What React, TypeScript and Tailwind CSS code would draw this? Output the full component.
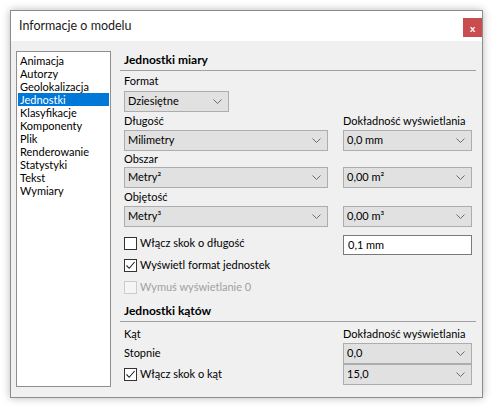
import React from 'react';

const font = { fontFamily: 'Lato, "Noto Sans", sans-serif' };

const sections = [
  'Animacja',
  'Autorzy',
  'Geolokalizacja',
  'Jednostki',
  'Klasyfikacje',
  'Komponenty',
  'Plik',
  'Renderowanie',
  'Statystyki',
  'Tekst',
  'Wymiary',
];

const Chevron: React.FC = () => (
  <svg width="9" height="5" viewBox="0 0 9 5" className="shrink-0">
    <path d="M0.5 0.5 L4.5 4.5 L8.5 0.5" fill="none" stroke="#6b6b6b" strokeWidth="1" />
  </svg>
);

interface SelectProps {
  value: string;
  className?: string;
}

const Select: React.FC<SelectProps> = ({ value, className = '' }) => (
  <div
    className={`flex h-[21px] items-center justify-between border border-[#adadad] bg-[#e1e1e1] pl-[3px] pr-[6px] ${className}`}
  >
    <span>{value}</span>
    <Chevron />
  </div>
);

interface CheckProps {
  label: string;
  checked?: boolean;
  disabled?: boolean;
}

const Check: React.FC<CheckProps> = ({ label, checked = false, disabled = false }) => (
  <div className="flex items-center gap-[3px]">
    <div
      className={`flex h-[13px] w-[13px] items-center justify-center border ${
        disabled ? 'border-[#cccccc] bg-[#f5f5f5]' : 'border-[#333333] bg-white'
      }`}
    >
      {checked && (
        <svg width="11" height="11" viewBox="0 0 11 11">
          <path d="M1.5 5.5 L4.2 8.3 L9.6 2" fill="none" stroke="#222" strokeWidth="1.1" />
        </svg>
      )}
    </div>
    <span className={disabled ? 'text-[#a0a0a0]' : ''}>{label}</span>
  </div>
);

const Heading: React.FC<{ children: React.ReactNode }> = ({ children }) => (
  <div className="flex h-[22px] items-center border-b border-[#a0a0a0] pl-[4px] text-[12px] font-bold">
    {children}
  </div>
);

export default function App() {
  return (
    <div
      className="h-[408px] w-[493px] whitespace-nowrap bg-white pl-[10px] pt-[10px] text-[11px] text-black"
      style={font}
    >
      <div className="flex h-[388px] w-[473px] flex-col border border-[#8c8c8c] bg-[#f0f0f0] shadow-[0_0_8px_rgba(0,0,0,0.28)]">
        <div className="flex h-[30px] shrink-0 items-start justify-between bg-white">
          <span className="mt-[6px] pl-[8px] text-[12.5px] text-[#1a1a1a]">Informacje o modelu</span>
          <div className="mt-[7px] flex h-[19px] w-[19px] items-center justify-center bg-[#c94c4f] text-[10px] font-bold leading-none text-white">
            x
          </div>
        </div>

        <div className="flex flex-1">
          <ul className="ml-[5px] mt-[10px] h-[336px] w-[95px] border border-[#8f8f8f] bg-white pt-[2px] leading-[13px]">
            {sections.map((s) => (
              <li
                key={s}
                className={`mx-[1px] h-[13px] pl-[2px] ${s === 'Jednostki' ? 'bg-[#0078d7] text-white' : ''}`}
              >
                {s}
              </li>
            ))}
          </ul>

          <div className="ml-[9px] mt-[8px] flex w-[356px] flex-col">
            <Heading>Jednostki miary</Heading>

            <div className="flex h-[20px] items-center pl-[4px]">Format</div>
            <Select value="Dziesiętne" className="ml-[4px] w-[105px]" />

            <div className="grid grid-cols-[204px_129px] gap-x-[15px] pl-[4px]">
              <div className="flex h-[18px] items-center">Długość</div>
              <div className="flex h-[18px] items-center">Dokładność wyświetlania</div>
              <Select value="Milimetry" />
              <Select value="0,0 mm" />

              <div className="flex h-[16px] items-center">Obszar</div>
              <div />
              <Select value="Metry²" />
              <Select value="0,00 m²" />

              <div className="flex h-[18px] items-center">Objętość</div>
              <div />
              <Select value="Metry³" />
              <Select value="0,00 m³" />

              <div className="mt-[5px] flex flex-col">
                <div className="flex h-[22px] items-center">
                  <Check label="Włącz skok o długość" />
                </div>
                <div className="flex h-[23px] items-center">
                  <Check label="Wyświetl format jednostek" checked />
                </div>
                <div className="flex h-[21px] items-center">
                  <Check label="Wymuś wyświetlanie 0" disabled />
                </div>
              </div>
              <div className="mt-[8px] flex h-[20px] items-center self-start border border-[#7a7a7a] bg-white pl-[4px]">
                0,1 mm
              </div>
            </div>

            <div className="mt-[2px]">
              <Heading>Jednostki kątów</Heading>
            </div>

            <div className="grid grid-cols-[204px_129px] gap-x-[15px] pl-[4px]">
              <div className="flex h-[21px] items-end pb-[1px]">Kąt</div>
              <div className="flex h-[21px] items-end pb-[1px]">Dokładność wyświetlania</div>
              <div className="flex h-[21px] items-center">Stopnie</div>
              <Select value="0,0" />
              <div className="flex h-[21px] items-center">
                <Check label="Włącz skok o kąt" checked />
              </div>
              <Select value="15,0" />
            </div>
          </div>
        </div>
      </div>
    </div>
  );
}
